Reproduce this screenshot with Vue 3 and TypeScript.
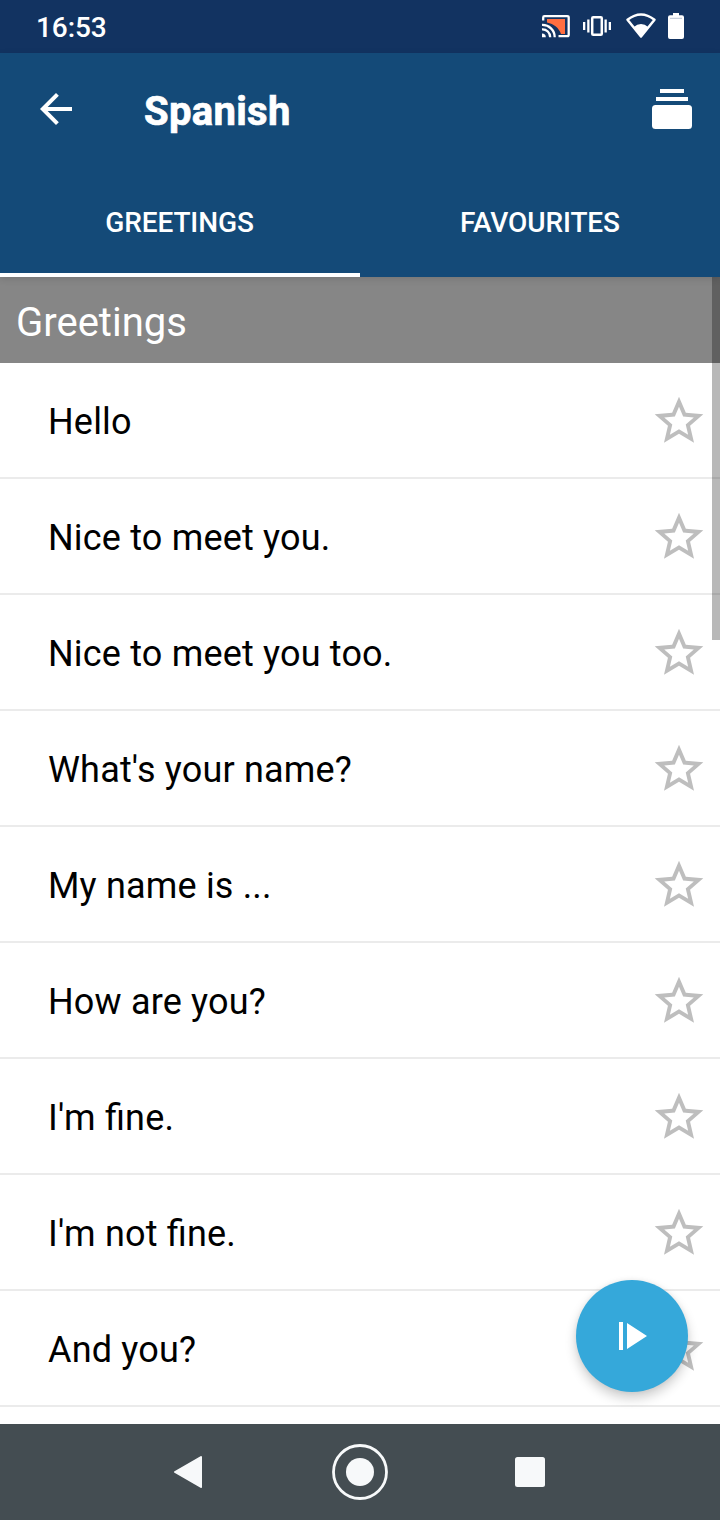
<script setup lang="ts">
interface Phrase {
  id: number
  text: string
}

const phrases: Phrase[] = [
  'Hello',
  'Nice to meet you.',
  'Nice to meet you too.',
  "What's your name?",
  'My name is ...',
  'How are you?',
  "I'm fine.",
  "I'm not fine.",
  'And you?',
].map((text, id) => ({ id, text }))
</script>

<template>
  <div class="screen">
    <div class="status-bar">
      <span class="clock">16:53</span>
      <svg class="status-icons" width="150" height="53" viewBox="540 0 150 53">
        <path d="M547 19H565V34H561C559 28 554 24 547 22.500Z" fill="#ff6e40" />
        <g fill="none" stroke="#fff" stroke-width="2.300">
          <path d="M543.200 20.500V17.500Q543.200 16.200 544.500 16.200H567.300Q568.700 16.200 568.700 17.500V34.800Q568.700 36.200 567.300 36.200H558.500" />
          <path d="M542 24.900A12.200 12.200 0 0 1 554.700 37.200M542 29.400A7.700 7.700 0 0 1 550.200 37.200" stroke="#123361" stroke-width="5" />
          <path d="M542 24.900A12.200 12.200 0 0 1 554.700 37.200M542 29.400A7.700 7.700 0 0 1 550.200 37.200" />
        </g>
        <path d="M542 33.500A3.800 3.800 0 0 1 545.800 37.200H542Z" fill="#fff" />
        <rect x="592.200" y="17.200" width="9.600" height="17.600" rx="1" fill="none" stroke="#fff" stroke-width="2.500" />
        <path d="M583 22H585.300V30H583ZM587.200 19.500H589.500V32.500H587.200ZM604.500 19.500H606.800V32.500H604.500ZM608.700 22H611V30H608.700Z" fill="#fff" />
        <path d="M627.500 19.800Q641 9.200 654.500 19.800L641 36.500Z" fill="none" stroke="#fff" stroke-width="2.500" stroke-linejoin="round" />
        <path d="M633.500 27.300Q641 20.800 648.500 27.300L641 37.500Z" fill="#fff" />
        <path d="M673 13H679V15.300H682Q684 15.300 684 17.300V37Q684 39 682 39H670Q668 39 668 37V17.300Q668 15.300 670 15.300H673Z" fill="#fff" />
        <path d="M670 18.300H682" stroke="#9ba9bf" stroke-width=".7" />
      </svg>
    </div>

    <header class="app-bar">
      <div class="toolbar">
        <svg class="back" width="32" height="32" viewBox="4 4 16 16">
          <path d="M20 11H7.830l5.590-5.590L12 4l-8 8 8 8 1.410-1.410L7.830 13H20v-2z" fill="#fff" />
        </svg>
        <h1 class="title">Spanish</h1>
        <svg class="decks" width="40" height="40" viewBox="0 0 40 40" fill="#fff">
          <rect x="8" y="0" width="24" height="4" />
          <rect x="4" y="8" width="32" height="4" />
          <rect x="0" y="16" width="40" height="24" rx="3.500" />
        </svg>
      </div>
      <nav class="tabs">
        <div class="tab active">GREETINGS</div>
        <div class="tab">FAVOURITES</div>
      </nav>
    </header>

    <main class="content">
      <h2 class="section">Greetings</h2>
      <ul class="phrases">
        <li v-for="phrase in phrases" :key="phrase.id" class="phrase">
          <span class="phrase-text">{{ phrase.text }}</span>
          <svg class="star" width="50" height="48" viewBox="1.712 1.712 20.576 19.753">
            <path d="M22 9.240l-7.190-.62L12 2 9.190 8.630 2 9.240l5.460 4.730L5.820 21 12 17.270 18.180 21l-1.630-7.030L22 9.240zM12 15.400l-3.760 2.270 1-4.280-3.320-2.880 4.380-.38L12 6.100l1.710 4.040 4.380.38-3.320 2.880 1 4.280L12 15.400z" fill="#bebebe" />
          </svg>
        </li>
      </ul>
      <div class="scrollbar"></div>
      <div class="fab">
        <svg width="28" height="28" viewBox="0 0 28 28" fill="#fff">
          <path d="M0 0H4V28H0ZM8 1L28 14L8 27Z" />
        </svg>
      </div>
    </main>

    <footer class="nav-bar">
      <svg width="720" height="96" viewBox="0 0 720 96" fill="#f7f9fa">
        <path d="M201 33L175 48L201 63Z" stroke="#f7f9fa" stroke-width="2" stroke-linejoin="round" />
        <circle cx="360" cy="48" r="26.500" fill="none" stroke="#f7f9fa" stroke-width="2.800" />
        <circle cx="360" cy="48" r="14" />
        <rect x="515" y="33" width="30" height="30" rx="2.500" />
      </svg>
    </footer>
  </div>
</template>

<style>
body {
  margin: 0;
}
</style>

<style scoped>
.screen {
  width: 720px;
  height: 1520px;
  display: flex;
  flex-direction: column;
  overflow: hidden;
  background: #fff;
  font-family: Roboto, "Liberation Sans", sans-serif;
}

.status-bar {
  box-sizing: border-box;
  height: 53px;
  display: flex;
  justify-content: space-between;
  padding: 0 30px 0 36px;
  background: #123361;
  color: #fff;
}

.clock {
  font-size: 28px;
  font-weight: 500;
  line-height: 55px;
  letter-spacing: -0.1px;
}

.app-bar {
  height: 224px;
  background: #144a78;
  color: #fff;
  position: relative;
  z-index: 1;
  box-shadow: 0 2px 7px rgba(0, 0, 0, 0.12);
}

.toolbar {
  box-sizing: border-box;
  height: 112px;
  display: flex;
  align-items: center;
  padding: 0 28px 0 40px;
}

.title {
  margin: 6px 0 0 72px;
  font-size: 40px;
  font-weight: 700;
  line-height: 48px;
  letter-spacing: 0.3px;
  -webkit-text-stroke: 0.7px #fff;
}

.decks {
  margin-left: auto;
}

.tabs {
  height: 112px;
  display: flex;
}

.tab {
  box-sizing: border-box;
  width: 360px;
  height: 112px;
  border-bottom: 4px solid transparent;
  font-size: 28px;
  font-weight: 500;
  line-height: 116px;
  letter-spacing: -0.1px;
  text-align: center;
}

.tab.active {
  padding-right: 1px;
  border-bottom-color: #fff;
}

.content {
  position: relative;
  height: 1147px;
  overflow: hidden;
}

.section {
  box-sizing: border-box;
  height: 86px;
  margin: 0;
  padding: 3px 16px 0;
  background: #868686;
  color: #fff;
  font-size: 40px;
  font-weight: 400;
  line-height: 86px;
}

.phrases {
  margin: 0;
  padding: 0;
  list-style: none;
}

.phrase {
  box-sizing: border-box;
  height: 116px;
  display: flex;
  align-items: center;
  justify-content: space-between;
  padding: 0 16px 0 48px;
  border-bottom: 2px solid #ebebeb;
}

.phrase-text {
  padding-top: 3px;
  color: #000;
  font-size: 36px;
  line-height: 42px;
  letter-spacing: 0.18px;
  font-feature-settings: "liga" 1;
  white-space: pre;
}

.scrollbar {
  position: absolute;
  top: 0;
  right: 0;
  width: 8px;
  height: 363px;
  background: rgba(0, 0, 0, 0.28);
}

.fab {
  box-sizing: border-box;
  position: absolute;
  right: 32px;
  bottom: 32px;
  width: 112px;
  height: 112px;
  display: flex;
  align-items: center;
  justify-content: center;
  padding-left: 2px;
  border-radius: 50%;
  background: #35a8da;
  box-shadow: 0 6px 12px rgba(0, 0, 0, 0.2), 0 0 5px rgba(0, 0, 0, 0.06);
}

.nav-bar {
  height: 96px;
  background: #444d52;
}
</style>
